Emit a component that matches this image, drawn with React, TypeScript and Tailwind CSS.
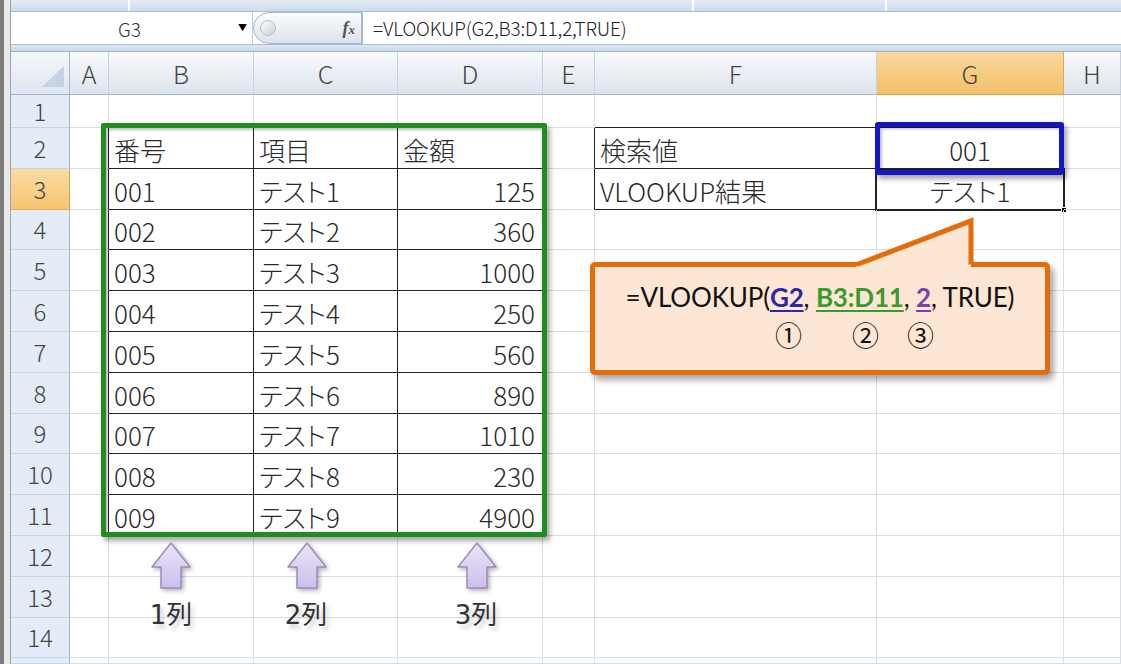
import React from "react";

const cols = ["A", "B", "C", "D", "E", "F", "G", "H"];
const rows = Array.from({ length: 15 }, (_, i) => i + 1);
const amounts = ["125", "360", "1000", "250", "560", "890", "1010", "230", "4900"];

type Cell = { text: string; align: "l" | "r" | "c" };

const cellOf = (col: string, row: number): Cell | null => {
    if (row === 2) {
        if (col === "B") return { text: "番号", align: "l" };
        if (col === "C") return { text: "項目", align: "l" };
        if (col === "D") return { text: "金額", align: "l" };
        if (col === "F") return { text: "検索値", align: "l" };
        if (col === "G") return { text: "001", align: "c" };
    }
    if (row >= 3 && row <= 11) {
        const n = row - 2;
        if (col === "B") return { text: "00" + n, align: "l" };
        if (col === "C") return { text: "テスト" + n, align: "l" };
        if (col === "D") return { text: amounts[n - 1], align: "r" };
    }
    if (row === 3) {
        if (col === "F") return { text: "VLOOKUP結果", align: "l" };
        if (col === "G") return { text: "テスト1", align: "c" };
    }
    return null;
};

const inMain = (col: string, row: number) => ["B", "C", "D"].includes(col) && row >= 2 && row <= 11;
const inLookup = (col: string, row: number) => ["F", "G"].includes(col) && row >= 2 && row <= 3;

const FormulaBar: React.FC = () => (
    <div className="flex h-[33px] shrink-0 border-b border-[#a9bdd6] bg-white">
        <div className="flex w-[242px] items-center border-r border-[#c3cfdf]">
            <span className="flex-1 pl-[10px] text-center text-[19px] font-light leading-none text-[#333]">G3</span>
            <span className="w-[14px] text-[9px] text-black">▼</span>
        </div>
        <div className="flex w-[109px] items-center rounded-l-full border border-[#a8b8cc] bg-gradient-to-b from-[#fbfcfd] to-[#dbe3ec] pl-[6px] pr-[6px]">
            <span className="h-[16px] w-[16px] rounded-full border border-[#b9c1cb] bg-gradient-to-br from-white to-[#c9cfd6]" />
            <span className="ml-auto font-['Liberation_Serif',serif] text-[18px] font-bold italic leading-none text-[#555]">
                f<span className="text-[13px]">x</span>
            </span>
        </div>
        <div className="flex flex-1 items-center border-l border-[#a8b8cc] pl-[10px] text-[19px] font-light tracking-[-0.2px] text-[#222]">
            =VLOOKUP(G2,B3:D11,2,TRUE)
        </div>
    </div>
);

const Sheet: React.FC = () => (
    <div className="grid min-h-0 flex-1 grid-cols-[59px_39px_145px_144px_145px_52px_282px_187px_1fr] grid-rows-[43px_33px_repeat(13,40.8px)_minmax(0,1fr)] overflow-hidden">
        <div className="relative border-r border-b border-[#9eb6ce] bg-gradient-to-b from-[#f4f7fb] to-[#dfe6ef]">
            <svg className="absolute right-[4px] bottom-[6px]" width="24" height="22" viewBox="0 0 24 22">
                <polygon points="23,0 23,21 1,21" fill="#c7d3e2" />
            </svg>
        </div>
        {cols.map((c) => (
            <div
                key={c}
                className={`flex items-center justify-center border-r border-b text-[25px] font-light leading-none ${
                    c === "G"
                        ? "border-r-[#e2a94b] border-b-[#d9a34a] bg-gradient-to-b from-[#f9d99f] to-[#f2c068] text-[#444]"
                        : "border-r-[#c6d1df] border-b-[#9eb6ce] bg-gradient-to-b from-[#f8fafc] to-[#dde4ed] text-[#444]"
                }`}
            >
                {c}
            </div>
        ))}
        {rows.map((r) => (
            <React.Fragment key={r}>
                <div
                    className={`flex items-center justify-center border-r border-b text-[24px] font-light leading-none ${
                        r === 3
                            ? "border-r-[#d9a34a] border-b-[#e2b060] bg-gradient-to-b from-[#fadca4] to-[#f5c56f] text-[#444]"
                            : "border-r-[#9eb6ce] border-b-[#c6d3e3] bg-[#e4ecf7] text-[#444]"
                    }`}
                >
                    {r < 15 ? r : ""}
                </div>
                {cols.map((c) => {
                    const table = inMain(c, r) || inLookup(c, r);
                    const rightBlack =
                        table || (c === "A" && r >= 2 && r <= 11) || (c === "E" && r >= 2 && r <= 3);
                    const bottomBlack =
                        table || (r === 1 && ["B", "C", "D", "F", "G"].includes(c));
                    const cell = cellOf(c, r);
                    return (
                        <div
                            key={c}
                            className={`relative flex items-center whitespace-nowrap border-r border-b pt-[4px] text-[26px] font-light leading-none text-[#2a2a2a] [font-feature-settings:'palt'] ${
                                rightBlack ? "border-r-[#222]" : "border-r-[#d9dee5]"
                            } ${bottomBlack ? "border-b-[#222]" : "border-b-[#d9dee5]"} ${
                                cell?.align === "r" ? "justify-end pr-[7px]" : cell?.align === "c" ? "justify-center" : "pl-[5px]"
                            }`}
                        >
                            {cell?.text}
                            {c === "G" && r === 3 && (
                                <div className="absolute -top-[1px] -left-[2px] -right-[2px] -bottom-[2px] border-2 border-[#222]">
                                    <div className="absolute -right-[4px] -bottom-[4px] h-[6px] w-[6px] border border-white bg-black" />
                                </div>
                            )}
                        </div>
                    );
                })}
            </React.Fragment>
        ))}
    </div>
);

const UpArrow: React.FC<{ x: number }> = ({ x }) => (
    <svg
        className="absolute top-[541px] drop-shadow-[2px_2px_2px_rgba(0,0,0,0.3)]"
        style={{ left: x - 21 }}
        width="42"
        height="50"
        viewBox="0 0 42 50"
    >
        <defs>
            <linearGradient id={`lil${x}`} x1="0" y1="0" x2="0" y2="1">
                <stop offset="0" stopColor="#ece4fa" />
                <stop offset="1" stopColor="#cdbfe9" />
            </linearGradient>
        </defs>
        <polygon
            points="21,2 40,26 31,26 31,47 11,47 11,26 2,26"
            fill={`url(#lil${x})`}
            stroke="#9b8cc2"
            strokeWidth="1.5"
            strokeLinejoin="round"
        />
    </svg>
);

const labels = [
    { x: 171, t: "1列" },
    { x: 306, t: "2列" },
    { x: 476, t: "3列" },
];

const App: React.FC = () => {
    return (
        <div className="relative flex h-[664px] w-[1121px] overflow-hidden bg-white font-['Noto_Sans_CJK_JP',sans-serif] text-[#222]">
            <div className="flex w-[11px] shrink-0">
                <div className="w-[4px] bg-[#7d7d7d]" />
                <div className="w-[7px] border-r border-[#a3a3a3] bg-[#e9e9e9]" />
            </div>
            <div className="flex h-full min-w-0 flex-1 flex-col">
                <div className="flex h-[12px] shrink-0 border-b border-[#a9bdd6] bg-gradient-to-b from-[#e3ebf5] to-[#cfdbea]">
                    <div className="w-[119px] border-r-2 border-white" />
                    <div className="w-[564px] border-r-2 border-white" />
                    <div className="w-[193px] border-r-2 border-white" />
                </div>
                <FormulaBar />
                <div className="h-[7px] shrink-0 border-b border-[#9eb6ce] bg-gradient-to-b from-[#dfe7f2] to-[#cbd7e7]" />
                <Sheet />
            </div>

            {/* green range box */}
            <div className="absolute top-[123px] left-[101px] h-[414px] w-[446px] rounded-[2px] border-[5px] border-[#1f8e1f] shadow-[3px_4px_5px_rgba(0,0,0,0.35),inset_2px_2px_3px_rgba(0,0,0,0.25)]" />

            {/* blue lookup value box */}
            <div className="absolute top-[122px] left-[875px] h-[53px] w-[189px] rounded-[3px] border-[5px] border-[#1616c8] shadow-[3px_4px_5px_rgba(0,0,0,0.35),inset_2px_2px_3px_rgba(0,0,0,0.25)]" />

            {/* callout */}
            <div className="absolute top-[262px] left-[590px] h-[113px] w-[460px] rounded-[5px] border-[5px] border-[#e46c0a] bg-[#fde6d4] shadow-[4px_5px_6px_rgba(0,0,0,0.35)]">
                <div className="pt-[13px] text-center font-['Lato',sans-serif] text-[26px] leading-[34px] tracking-[-0.15px] text-[#111]">
                    =VLOOKUP(
                    <span className="font-bold text-[#2a2aa6] underline underline-offset-[3px]">G2</span>,{" "}
                    <span className="font-bold text-[#3b9a2e] underline underline-offset-[3px]">B3:D11</span>,{" "}
                    <span className="font-bold text-[#7b3fa9] underline underline-offset-[3px]">2</span>, TRUE)
                </div>
                <div className="mt-[6px] flex pl-[180px] text-[27px] leading-[30px] text-[#111]">
                    <span className="w-[26px] text-center">①</span>
                    <span className="ml-[51px] w-[26px] text-center">②</span>
                    <span className="ml-[29px] w-[26px] text-center">③</span>
                </div>
            </div>
            <svg className="absolute top-[212px] left-[840px]" width="145" height="60" viewBox="0 0 145 60">
                <polygon points="10,57 131,9 131,57" fill="#fde6d4" />
                <polyline points="17,52.5 131,9 131,52.5" fill="none" stroke="#e46c0a" strokeWidth="5" strokeLinejoin="miter" />
            </svg>

            {/* column arrows */}
            <UpArrow x={171} />
            <UpArrow x={307} />
            <UpArrow x={477} />
            {labels.map((l) => (
                <div
                    key={l.t}
                    className="absolute top-[600px] w-[60px] text-center font-['DejaVu_Sans','Noto_Sans_CJK_JP',sans-serif] text-[26px] leading-[30px] text-[#333] [text-shadow:3px_4px_4px_rgba(0,0,0,0.2)]"
                    style={{ left: l.x - 30 }}
                >
                    {l.t}
                </div>
            ))}
        </div>
    );
};

export default App;
